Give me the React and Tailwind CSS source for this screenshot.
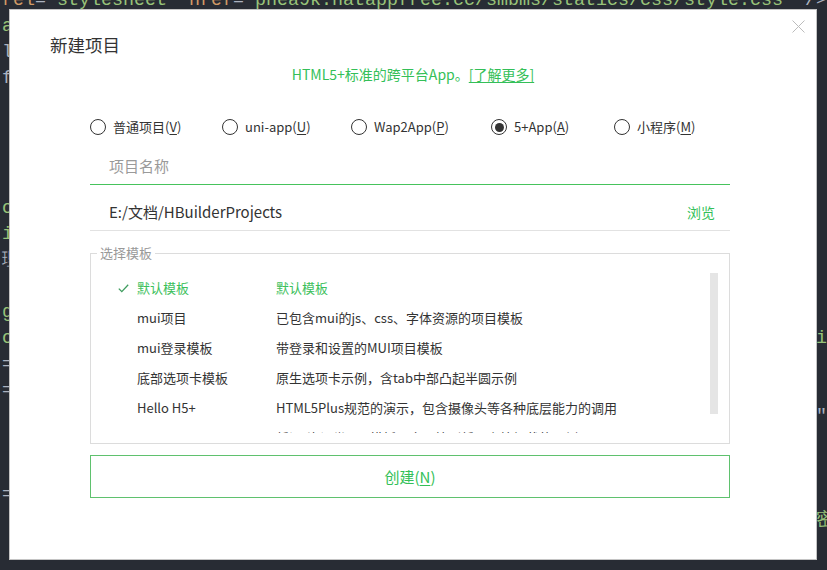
import { useState } from "react";

const codeLines = [
    { left: [["rel", "text-[#d19a66]"], ["=", "text-[#abb2bf]"], ['"stylesheet"', "text-[#98c379]"], [" ", ""], ["href", "text-[#d19a66]"], ["=", "text-[#abb2bf]"], ['"pnea9k.natappfree.cc/smbms/statics/css/style.css"', "text-[#98c379]"], [" />", "text-[#abb2bf]"]] },
    { left: [["ajax.js", "text-[#98c379]"]] },
    { left: [["link", "text-[#abb2bf]"]] },
    { left: [["function", "text-[#abb2bf]"]] },
    {},
    {},
    {},
    {},
    { left: [["onload", "text-[#98c379]"]] },
    { left: [["init", "text-[#98c379]"]] },
    { left: [["理", "text-[#abb2bf]"]] },
    {},
    { left: [["get", "text-[#98c379]"]] },
    { left: [["open", "text-[#98c379]"]], right: ["i", "text-[#98c379]"] },
    { left: [["=", "text-[#abb2bf]"]] },
    { left: [["=", "text-[#abb2bf]"]] },
    { right: ['"', "text-[#abb2bf]"] },
    {},
    {},
    { left: [["=", "text-[#abb2bf]"]] },
    { right: ["密", "text-[#98c379]"] },
    {},
];

// widths measured from circle to next circle
const radios = [
    { label: "普通项目", key: "V", w: "w-[132px]" },
    { label: "uni-app", key: "U", w: "w-[129px]" },
    { label: "Wap2App", key: "P", w: "w-[140px]" },
    { label: "5+App", key: "A", w: "w-[123px]" },
    { label: "小程序", key: "M", w: "" },
];

const templates = [
    { name: "默认模板", desc: "默认模板" },
    { name: "mui项目", desc: "已包含mui的js、css、字体资源的项目模板" },
    { name: "mui登录模板", desc: "带登录和设置的MUI项目模板" },
    { name: "底部选项卡模板", desc: "原生选项卡示例，含tab中部凸起半圆示例" },
    { name: "Hello H5+", desc: "HTML5Plus规范的演示，包含摄像头等各种底层能力的调用" },
    { name: "", desc: "新闻/资讯类App模板，含下拉刷新、上拉加载的示例" },
];

const Radio = ({ checked }) => (
    <span className="flex h-[16px] w-[16px] shrink-0 items-center justify-center rounded-full border-[1.5px] border-[#333]">
        {checked && <span className="h-[9px] w-[9px] rounded-full bg-[#333]" />}
    </span>
);

const App = () => {
    const [kind, setKind] = useState("A");
    const [selected, setSelected] = useState(0);

    return (
        <div className="relative h-[570px] w-[827px] overflow-hidden bg-[#282c34] font-['Liberation_Mono',monospace] text-[18.33px] leading-[26px]">
            {/* editor behind the dialog */}
            <div className="-mt-[12px] pl-[2px]">
                {codeLines.map((line, i) => (
                    <div key={i} className="flex h-[26px] justify-between whitespace-pre">
                        <span>
                            {(line.left || []).map(([t, c], j) => (
                                <span key={j} className={c}>
                                    {t}
                                </span>
                            ))}
                        </span>
                        {line.right && <span className={`w-[11px] ${line.right[1]}`}>{line.right[0]}</span>}
                    </div>
                ))}
            </div>

            {/* dialog */}
            <div className="absolute left-[9px] top-[9px] h-[551px] w-[808px] border border-[#c4c4c4] bg-white font-['Noto_Sans_CJK_SC','Noto_Sans',sans-serif] text-[#333]">
                <button className="absolute right-[11px] top-[10px] h-[13px] w-[13px] text-[#bcbcbc]">
                    <svg viewBox="0 0 13 13" className="h-[13px] w-[13px]" stroke="currentColor" strokeWidth="1">
                        <path d="M0.5 0.5L12.5 12.5M12.5 0.5L0.5 12.5" />
                    </svg>
                </button>

                <h2 className="pl-[40px] pt-[23px] text-[17.5px] leading-[24px]">新建项目</h2>

                <p className="mt-[7px] text-center text-[14px] leading-[20px] text-[#34bf58]">
                    HTML5+标准的跨平台App。<span className="underline underline-offset-2">[了解更多]</span>
                </p>

                <div className="ml-[80px] w-[640px]">
                    <div className="mt-[33px] flex h-[20px] items-center text-[13px]">
                        {radios.map((r) => (
                            <label key={r.key} className={`flex cursor-pointer items-center gap-[7px] ${r.w}`} onClick={() => setKind(r.key)}>
                                <Radio checked={kind === r.key} />
                                <span>
                                    {r.label}(<span className="underline underline-offset-2">{r.key}</span>)
                                </span>
                            </label>
                        ))}
                    </div>

                    <div className="mt-[10px] flex h-[38px] items-center border-b border-[#46c35c] pl-[19px] text-[15px] text-[#9a9a9a]">
                        项目名称
                    </div>

                    <div className="mt-[8px] flex h-[38px] items-center justify-between border-b border-[#e2e2e2] pl-[19px] pr-[15px]">
                        <span className="text-[15px]">E:/文档/HBuilderProjects</span>
                        <span className="text-[14px] text-[#34bf58]">浏览</span>
                    </div>

                    <fieldset className="mt-[13px] border border-[#dcdcdc]">
                        <legend className="ml-[6px] px-[3px] text-[13px] leading-[18px] text-[#999]">选择模板</legend>
                        <div className="flex pb-[10px] pt-[11px]">
                            <div className="h-[160px] flex-1 overflow-hidden text-[13px]">
                                {templates.map((t, i) => (
                                    <div
                                        key={i}
                                        className={`flex h-[30px] cursor-pointer items-center pl-[27px] ${selected === i ? "text-[#3cbf5c]" : ""}`}
                                        onClick={() => setSelected(i)}
                                    >
                                        <span className="w-[19px]">
                                            {selected === i && (
                                                <svg viewBox="0 0 11 9" className="h-[9px] w-[11px]" fill="none" stroke="#3f9d5f" strokeWidth="1.3">
                                                    <path d="M0.8 4.6L3.8 7.6L10.2 0.8" />
                                                </svg>
                                            )}
                                        </span>
                                        <span className="w-[139px]">{t.name}</span>
                                        <span>{t.desc}</span>
                                    </div>
                                ))}
                            </div>
                            <div className="mr-[11px] w-[8px]">
                                <div className="h-[141px] bg-[#e5e5e5]" />
                            </div>
                        </div>
                    </fieldset>

                    <button className="mt-[11px] flex h-[43px] w-full items-center justify-center border border-[#5fc16e] text-[15px] text-[#34bf58]">
                        创建(<span className="underline underline-offset-2">N</span>)
                    </button>
                </div>
            </div>
        </div>
    );
};

export default App;
